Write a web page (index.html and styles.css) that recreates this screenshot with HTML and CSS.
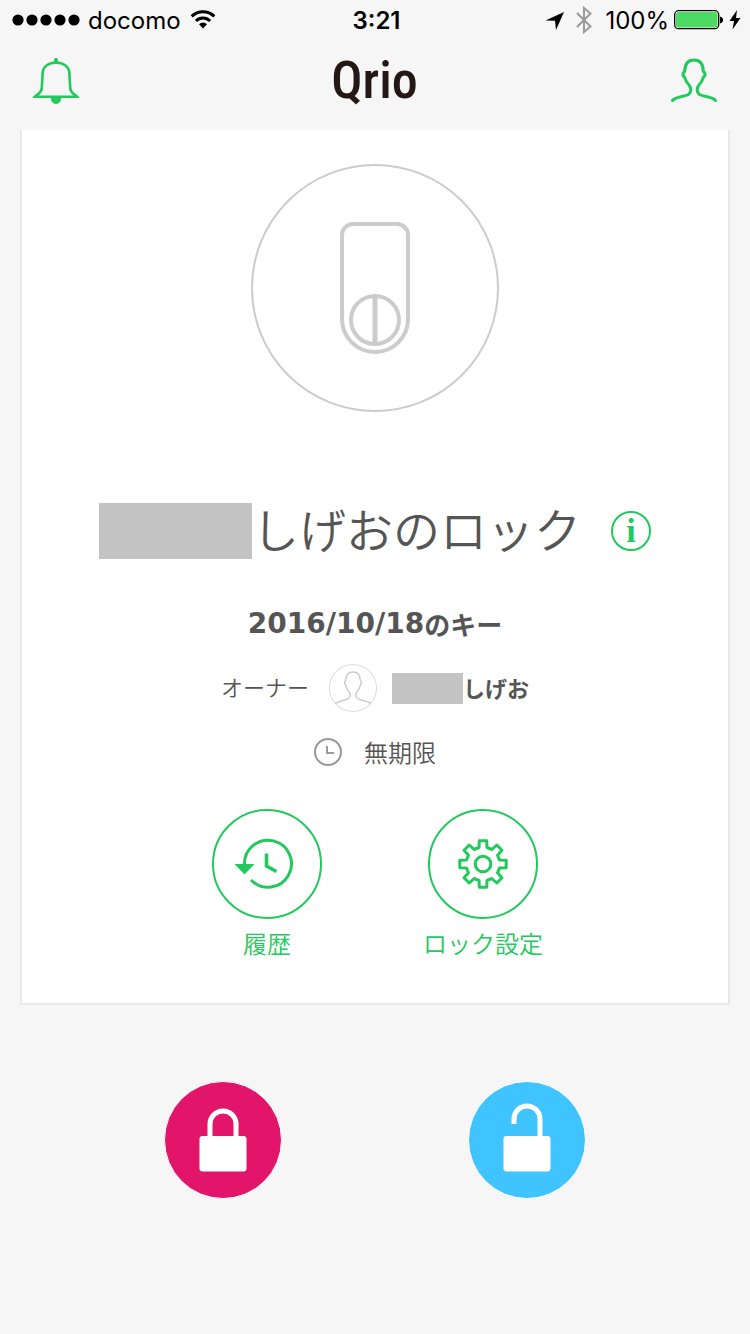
FILE: index.html
```html
<!DOCTYPE html>
<html lang="ja">
<head>
  <meta charset="UTF-8">
  <meta name="viewport" content="width=device-width, initial-scale=1.0">
  <title>Qrio</title>
  <link rel="stylesheet" href="styles.css">
</head>
<body>
  <div class="status-bar">
    <div class="status-left">
      <svg width="68" height="12" viewBox="0 0 68 12">
        <circle cx="6" cy="6" r="5.6"/>
        <circle cx="20" cy="6" r="5.6"/>
        <circle cx="34" cy="6" r="5.6"/>
        <circle cx="48" cy="6" r="5.6"/>
        <circle cx="62" cy="6" r="5.6"/>
      </svg>
      <span class="carrier">docomo</span>
      <svg width="26" height="20" viewBox="0 0 26 20">
        <path d="M1.7 6.4A16 16 0 0 1 24.3 6.4" fill="none" stroke="#000" stroke-width="3"/>
        <path d="M5.9 11A10 10 0 0 1 20.1 11" fill="none" stroke="#000" stroke-width="3"/>
        <path d="M9 14.2A5.8 5.8 0 0 1 17 14.2L13 18.5Z"/>
      </svg>
    </div>
    <span class="time">3:21</span>
    <div class="status-right">
      <svg width="20" height="20" viewBox="0 0 20 20">
        <path d="M0.500 10.500L19 2L11 20L10 10.800Z"/>
      </svg>
      <svg class="bluetooth" width="18" height="28" viewBox="0 0 18 28">
        <path d="M2 7L15.500 20.500L9 26V2L15.500 7.500L2 21" fill="none" stroke="#999" stroke-width="2"/>
      </svg>
      <span>100%</span>
      <svg class="battery" width="50" height="20" viewBox="0 0 50 20">
        <rect x="0.700" y="0.700" width="44" height="18" rx="4" fill="#fff" stroke="#000" stroke-width="1.300"/>
        <rect x="2" y="2" width="41.500" height="15.500" rx="2.500" fill="#4cd964"/>
        <path d="M46 6.500C50 7 50 13 46 13.500Z"/>
      </svg>
      <svg class="bolt" width="12" height="20" viewBox="0 0 12 20">
        <path d="M8 0L0.500 11H5L3.500 19.500L11.500 8H7Z"/>
      </svg>
    </div>
  </div>

  <header class="header">
    <button class="icon-btn" aria-label="お知らせ">
      <svg width="46" height="48" viewBox="0 0 46 48">
        <path d="M2 39.700H44C41 37 37.800 35.500 37.300 32L36.300 15.500C36 9.500 30 5.600 23 5.600S10 9.500 9.700 15.500L8.700 32C8.200 35.500 5 37 2 39.700Z" fill="none" stroke="#22c95c" stroke-width="2.600"/>
        <path d="M21 5V3A2 2 0 0 1 25 3V5ZM18 40H28V42A5 5 0 0 1 18 42Z" fill="#22c95c"/>
      </svg>
    </button>
    <h1 class="logo">Qrio</h1>
    <button class="icon-btn" aria-label="アカウント">
      <svg width="48" height="48" viewBox="0 0 48 48">
        <path d="M2.500 43.500C6 39.500 14 40 18.500 37.500C21.500 35.500 21.500 31 19 28C16.500 25.500 15.500 23.500 15 21L13 18.500C12.700 16.500 13 15.500 14.700 14.500C14.800 7 17.500 2.900 24 2.900S33.200 7 33.300 14.500C35 15.500 35.300 16.500 35 18.500L33 21C32.500 23.500 31.500 25.500 29 28C26.500 31 26.500 35.500 29.500 37.500C34 40 42 39.500 45.500 43.500" fill="none" stroke="#22c95c" stroke-width="3" stroke-linecap="round"/>
      </svg>
    </button>
  </header>

  <main class="card">
    <div class="device">
      <svg width="72" height="134" viewBox="0 0 72 134" fill="none" stroke="#ccc" stroke-width="4">
        <path d="M14 3H58A11 11 0 0 1 69 14V98A33 33 0 0 1 3 98V14A11 11 0 0 1 14 3Z"/>
        <circle cx="36" cy="99" r="24"/>
        <path d="M36 75V123" stroke-width="5"/>
      </svg>
    </div>

    <div class="title-row">
      <h2 class="title"><span class="mask"></span>しげおのロック</h2>
      <button class="info-btn" aria-label="情報">i</button>
    </div>

    <p class="key-name"><span class="date">2016/10/18</span>のキー</p>

    <div class="owner">
      <span class="owner-label">オーナー</span>
      <span class="avatar">
        <svg width="48" height="48" viewBox="0 0 48 48">
          <path d="M6 40C10 36 17 37 20 34C22 32 21 29 19.500 27C17.500 25 17 23.500 16.800 21.500L15.600 19.500C15.400 18 15.500 17 16.800 16C17 10.500 19.500 8 24 8S31 10.500 31.200 16C32.500 17 32.600 18 32.400 19.500L31.200 21.500C31 23.500 30.500 25 28.500 27C27 29 26 32 28 34C31 37 38 36 42 40" fill="none" stroke="#ccc" stroke-width="1.500"/>
        </svg>
      </span>
      <span class="owner-name"><span class="mask mask-small"></span>しげお</span>
    </div>

    <div class="period">
      <svg width="28" height="28" viewBox="0 0 28 28" fill="none" stroke="#999" stroke-width="2">
        <circle cx="14" cy="14" r="13"/>
        <path d="M13 8V15H20"/>
      </svg>
      <span>無期限</span>
    </div>

    <div class="actions">
      <button class="action">
        <span class="action-icon">
          <svg width="106" height="106" viewBox="2 2 106 106">
            <path d="M32.500 56A23.500 23.500 0 1 1 39 71" fill="none" stroke="#22c95c" stroke-width="3"/>
            <path d="M22.500 55H42.500L32.500 65.500Z" fill="#22c95c"/>
            <path d="M54.500 44.500V57L64.500 62.500" fill="none" stroke="#22c95c" stroke-width="3.600"/>
          </svg>
        </span>
        履歴
      </button>
      <button class="action">
        <span class="action-icon">
          <svg width="106" height="106" viewBox="-53 -53 106 106" fill="none" stroke="#22c95c" stroke-width="3" stroke-linejoin="round">
            <path d="M-4-16.500L-3.700-23.200H3.700L4-16.500L8.800-14.500L13.800-19L19-13.800L14.500-8.800L16.500-4L23.200-3.700V3.700L16.500 4L14.500 8.800L19 13.800L13.800 19L8.800 14.500L4 16.500L3.700 23.200H-3.700L-4 16.500L-8.800 14.500L-13.800 19L-19 13.800L-14.500 8.800L-16.500 4L-23.200 3.700V-3.700L-16.500-4L-14.500-8.800L-19-13.800L-13.800-19L-8.800-14.500Z"/>
            <circle r="7.800"/>
          </svg>
        </span>
        ロック設定
      </button>
    </div>
  </main>

  <footer class="controls">
    <button class="lock-btn lock" aria-label="施錠">
      <svg width="48" height="64" viewBox="0 0 48 64">
        <path d="M11 30V16A13 13 0 0 1 37 16V30" fill="none" stroke="#fff" stroke-width="5"/>
        <rect x="0.500" y="28" width="47" height="35.500" rx="3" fill="#fff"/>
      </svg>
    </button>
    <button class="lock-btn unlock" aria-label="解錠">
      <svg width="48" height="72" viewBox="0 0 48 72">
        <path d="M11 24V19A13 13 0 0 1 37 19V38" fill="none" stroke="#fff" stroke-width="5"/>
        <rect x="0.500" y="36" width="47" height="35.500" rx="3" fill="#fff"/>
      </svg>
    </button>
  </footer>
</body>
</html>
```
FILE: styles.css
```css
* {
  box-sizing: border-box;
}
body {
  margin: 0;
  background-color: #f6f6f6;
  color: #555;
  font-family: "Noto Sans CJK JP", sans-serif;
}
h1, h2, p {
  margin: 0;
}
svg {
  display: block;
  flex-shrink: 0;
}
button {
  padding: 0;
  border: none;
  background: none;
  color: #22c95c;
  font-family: inherit;
  cursor: pointer;
}

/* status bar */
.status-bar {
  display: grid;
  grid-template-columns: 1fr auto 1fr;
  align-items: center;
  height: 40px;
  padding: 0 9px 0 12px;
  color: #000;
  font-family: Inter, sans-serif;
  font-size: 24px;
}
.status-left, .status-right {
  display: flex;
  align-items: center;
}
.status-right {
  justify-content: flex-end;
}
.carrier {
  margin: 0 9px 0 8px;
}
.time {
  font-weight: 600;
}
.bluetooth {
  margin: 0 12px 0 10px;
}
.battery {
  margin: 0 5px 0 5px;
}

/* header */
.header {
  display: flex;
  justify-content: space-between;
  align-items: center;
  height: 90px;
  padding: 0 32px 0 33px;
}
.icon-btn {
  padding-bottom: 8px;
}
.logo {
  color: #231815;
  font-family: "Roboto Condensed", "Liberation Sans Narrow", Roboto, sans-serif;
  font-size: 52px;
  font-weight: 500;
  line-height: 60px;
  padding-bottom: 8px;
}

/* card */
.card {
  display: flex;
  flex-direction: column;
  align-items: center;
  margin: 0 20px;
  padding: 34px 0 40px;
  background-color: #fff;
  border: 2px solid #e8e8e8;
  border-top: none;
}
.device {
  display: flex;
  justify-content: center;
  align-items: center;
  width: 248px;
  height: 248px;
  border: 2px solid #ccc;
  border-radius: 50%;
}
.title-row {
  display: flex;
  align-items: center;
  gap: 30px;
  margin-top: 91px;
}
.title {
  display: flex;
  align-items: flex-start;
  font-size: 47px;
  font-weight: 350;
  line-height: 50px;
}
.mask {
  width: 153px;
  height: 56px;
  background-color: #c3c3c3;
}
.mask-small {
  width: 71px;
  height: 31px;
}
.info-btn {
  width: 40px;
  height: 40px;
  border: 2px solid #22c95c;
  border-radius: 50%;
  font-family: "Liberation Serif", serif;
  font-size: 34px;
  font-weight: bold;
  line-height: 36px;
}
.key-name {
  display: flex;
  align-items: center;
  margin-top: 45px;
  font-size: 26px;
  font-weight: bold;
  line-height: 40px;
}
.date {
  font-family: "DejaVu Sans", sans-serif;
  font-size: 28px;
}
.owner {
  display: flex;
  align-items: center;
  margin-top: 20px;
  font-size: 22px;
  line-height: 28px;
}
.owner-label {
  font-weight: 350;
  padding-bottom: 4px;
}
.avatar {
  margin: 0 15px 0 20px;
  border-radius: 50%;
  box-shadow: inset 0 0 0 1px #ddd;
}
.owner-name {
  display: flex;
  align-items: flex-start;
  font-weight: bold;
}
.period {
  display: flex;
  align-items: center;
  gap: 22px;
  margin-top: 20px;
  font-size: 24px;
  font-weight: 350;
  line-height: 40px;
}
.actions {
  display: grid;
  grid-template-columns: 216px 216px;
  margin-top: 37px;
}
.action {
  display: flex;
  flex-direction: column;
  align-items: center;
  gap: 4px;
  font-size: 24px;
  font-weight: 350;
  line-height: 40px;
}
.action-icon {
  width: 110px;
  height: 110px;
  border: 2px solid #22c95c;
  border-radius: 50%;
}

/* lock buttons */
.controls {
  display: flex;
  justify-content: center;
  gap: 186px;
  padding: 76px 0;
}
.lock-btn {
  display: flex;
  justify-content: center;
  align-items: flex-end;
  width: 118px;
  height: 118px;
  padding-bottom: 26px;
  border: 1px solid #fff;
  border-radius: 50%;
}
.lock {
  background-color: #e2156b;
}
.unlock {
  background-color: #40c4ff;
}
```
